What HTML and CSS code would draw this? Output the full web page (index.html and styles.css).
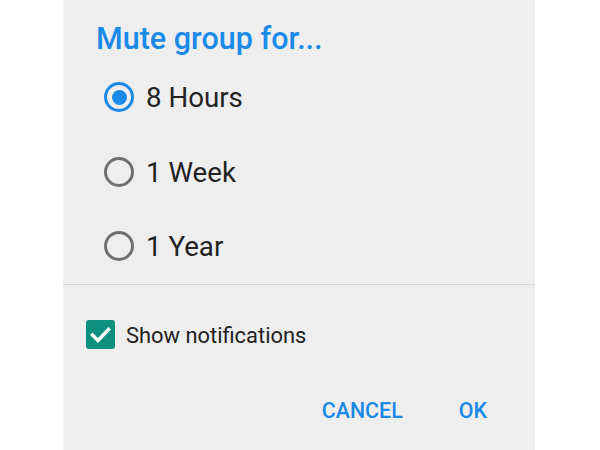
FILE: index.html
```html
<!DOCTYPE html>
<html>
<head>
<meta charset="utf-8">
<link rel="stylesheet" href="styles.css">
</head>
<body>
<div class="dialog">
  <div class="title">Mute group for...</div>
  <div class="options">
    <div class="option">
      <span class="radio checked"><span class="dot"></span></span>
      <span class="label">8 Hours</span>
    </div>
    <div class="option">
      <span class="radio"></span>
      <span class="label">1 Week</span>
    </div>
    <div class="option">
      <span class="radio"></span>
      <span class="label">1 Year</span>
    </div>
  </div>
  <div class="divider"></div>
  <div class="check-row">
    <span class="checkbox">
      <svg width="29" height="29" viewBox="0 0 29 29"><polyline points="6.5,15 12,20.5 22.5,9.5" fill="none" stroke="#ffffff" stroke-width="3.4" stroke-linecap="square"/></svg>
    </span>
    <span class="check-label">Show notifications</span>
  </div>
  <div class="actions">
    <span class="btn">CANCEL</span>
    <span class="btn">OK</span>
  </div>
</div>
</body>
</html>
```
FILE: styles.css
```css
html, body {
  margin: 0;
  padding: 0;
  background: #ffffff;
}
body {
  font-family: Roboto, "Noto Sans", sans-serif;
  width: 600px;
  height: 450px;
  overflow: hidden;
}
.dialog {
  margin-left: 63px;
  width: 472px;
  height: 450px;
  background: #eeeeee;
  box-sizing: border-box;
}
.title {
  height: 60px;
  box-sizing: border-box;
  padding-top: 22px;
  padding-left: 33px;
  font-size: 30.5px;
  line-height: 34px;
  font-weight: 500;
  color: #1a8ae8;
}
.option {
  height: 74.5px;
  display: flex;
  align-items: center;
  padding-left: 41px;
}
.radio {
  width: 30px;
  height: 30px;
  box-sizing: border-box;
  border: 3px solid #6f6f6f;
  border-radius: 50%;
  display: flex;
  align-items: center;
  justify-content: center;
  margin-right: 12px;
}
.radio.checked {
  border-color: #1a8ae8;
}
.dot {
  width: 15px;
  height: 15px;
  border-radius: 50%;
  background: #1a8ae8;
}
.label {
  font-size: 27.7px;
  color: #222222;
  padding-top: 1px;
}
.divider {
  height: 1px;
  background: #d6d6d6;
}
.check-row {
  height: 100px;
  display: flex;
  align-items: center;
  padding-left: 23px;
}
.checkbox {
  width: 29px;
  height: 29px;
  border-radius: 3px;
  background: #0f8f7e;
  display: flex;
  margin-right: 11px;
}
.check-label {
  font-size: 21.9px;
  color: #222222;
  padding-top: 2px;
}
.actions {
  height: 52px;
  display: flex;
  align-items: center;
  justify-content: flex-end;
  padding-right: 48px;
  gap: 56px;
}
.btn {
  font-size: 21.4px;
  font-weight: 500;
  color: #1a8ae8;
}
```
